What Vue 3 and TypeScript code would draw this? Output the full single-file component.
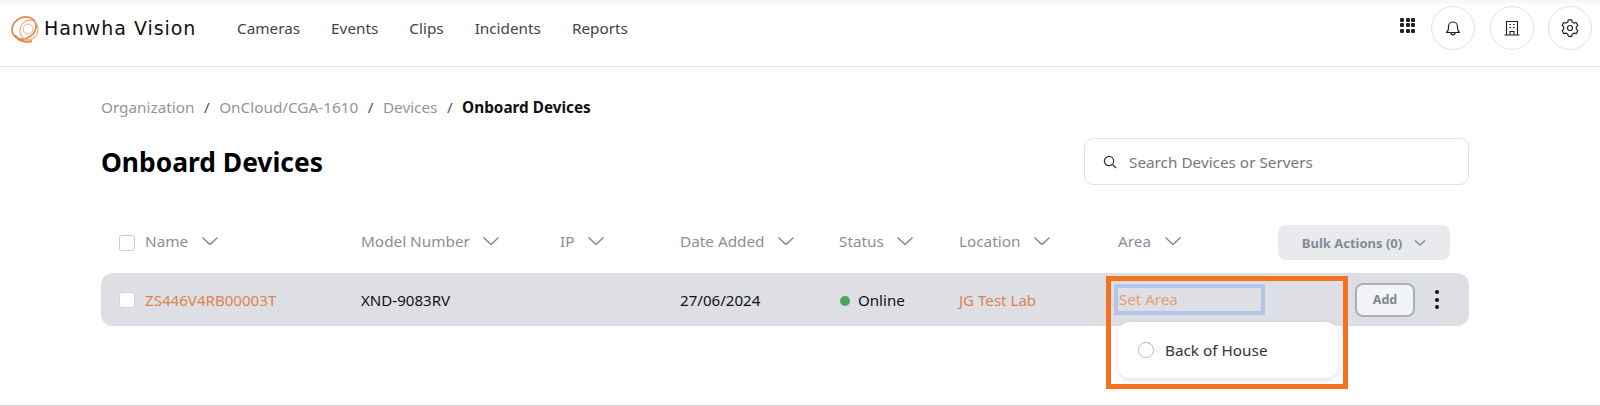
<script setup lang="ts">
interface Column { label: string; cls: string }
const navItems: string[] = ['Cameras', 'Events', 'Clips', 'Incidents', 'Reports']
const columns: Column[] = [
  { label: 'Name', cls: 'c-name' },
  { label: 'Model Number', cls: 'c-model' },
  { label: 'IP', cls: 'c-ip' },
  { label: 'Date Added', cls: 'c-date' },
  { label: 'Status', cls: 'c-status' },
  { label: 'Location', cls: 'c-loc' },
  { label: 'Area', cls: 'c-area' }
]
</script>

<template>
  <div class="page">
    <header class="topbar">
      <div class="logo">
        <svg class="logo-mark" width="33" height="30" viewBox="0 0 33 30" fill="none" stroke="#e08a4a">
          <ellipse cx="14" cy="14" rx="12.500" ry="10.500" stroke-width="1.700" transform="rotate(-30 14 14)" />
          <ellipse cx="19" cy="16" rx="9" ry="10" stroke-width="1.100" stroke="#e9a878" transform="rotate(20 19 16)" />
          <circle cx="18" cy="15" r="5" stroke-width="1" stroke="#e9b48e" />
          <path d="M5 21c3 6 11 8 17 6" stroke-width="2" />
        </svg>
        <span class="logo-text">Hanwha Vision</span>
      </div>
      <nav class="nav">
        <span v-for="item in navItems" :key="item">{{ item }}</span>
      </nav>
      <div class="top-actions">
        <div class="grid-icon"><i v-for="n in 9" :key="n"></i></div>
        <button class="round">
          <svg width="18" height="18" viewBox="0 0 18 18" fill="none" stroke="#222" stroke-width="1.200" stroke-linejoin="round">
            <path d="M2.500 13.500h13c-1.400-1-2-2.200-2-4.500V7.500a4.500 4.500 0 0 0-9 0V9c0 2.300-.6 3.500-2 4.500Z" />
            <path d="M7 13.800a2 2 0 0 0 4 0" />
          </svg>
        </button>
        <button class="round">
          <svg width="18" height="18" viewBox="0 0 18 18" fill="none" stroke="#222" stroke-width="1.100">
            <path d="M3.500 16V2.500h11V16M1.500 16h15" />
            <path d="M7 16v-3.500h4V16" />
            <path d="M6.500 5.500h1.500M10 5.500h1.500M6.500 8.500h1.500M10 8.500h1.500" />
          </svg>
        </button>
        <button class="round">
          <svg width="18" height="18" viewBox="0 0 18 18" fill="none" stroke="#222" stroke-width="1.200" stroke-linejoin="round">
            <path d="M7.300 1.800h3.400l.5 2.100 1.900 1.100 2.100-.6 1.600 2.900-1.500 1.700v2l1.500 1.700-1.600 2.900-2.100-.6-1.900 1.100-.5 2.100H7.300" transform="translate(0 -.9)" />
            <path d="M7.300 1.800l-.5 2.100-1.900 1.100-2.100-.6-1.600 2.900 1.500 1.700v2l-1.500 1.700 1.600 2.900 2.100-.6 1.900 1.100.5 2.100" transform="translate(0 -.9)" />
            <circle cx="9" cy="9" r="2.500" />
          </svg>
        </button>
      </div>
    </header>

    <main class="content">
      <div class="crumbs">
        <span>Organization</span><em>/</em>
        <span>OnCloud/CGA-1610</span><em>/</em>
        <span>Devices</span><em>/</em>
        <strong>Onboard Devices</strong>
      </div>

      <div class="title-row">
        <h1>Onboard Devices</h1>
        <div class="search">
          <svg width="14" height="14" viewBox="0 0 14 14" fill="none" stroke="#333" stroke-width="1.200">
            <circle cx="6" cy="6" r="4.600" />
            <path d="M9.500 9.500l3.500 3.500" />
          </svg>
          <span>Search Devices or Servers</span>
        </div>
      </div>

      <div class="table-head">
        <span class="check head-check"></span>
        <div v-for="col in columns" :key="col.label" class="th" :class="col.cls">
          <span>{{ col.label }}</span>
          <svg class="chev" width="18" height="10" viewBox="0 0 18 10" fill="none" stroke="#7d8791" stroke-width="1.300">
            <path d="M1.500 1.500 9 8.500l7.500-7" />
          </svg>
        </div>
        <button class="bulk">
          <span>Bulk Actions (0)</span>
          <svg width="12" height="8" viewBox="0 0 12 8" fill="none" stroke="#838b96" stroke-width="1.500">
            <path d="M1 1.500 6 6l5-4.500" />
          </svg>
        </button>
      </div>

      <div class="table-row">
        <span class="check row-check"></span>
        <div class="td c-name link">ZS446V4RB00003T</div>
        <div class="td c-model">XND-9083RV</div>
        <div class="td c-ip"></div>
        <div class="td c-date">27/06/2024</div>
        <div class="td c-status"><i class="dot"></i>Online</div>
        <div class="td c-loc link">JG Test Lab</div>
        <div class="td c-area">
          <span class="set-area">Set Area</span>
          <div class="menu">
            <i class="radio"></i>
            <span>Back of House</span>
          </div>
          <div class="callout"></div>
        </div>
        <button class="add">Add</button>
        <div class="kebab"><i></i><i></i><i></i></div>
      </div>
    </main>
  </div>
</template>

<style scoped>
.page {
  width: 1600px;
  height: 406px;
  box-sizing: border-box;
  background: #fff;
  border-bottom: 1px solid #c8c8c8;
  overflow: hidden;
  font-family: "Noto Sans", "Open Sans", sans-serif;
  color: #111;
}
.topbar {
  height: 67px;
  box-sizing: border-box;
  display: flex;
  align-items: center;
  border-bottom: 1px solid #e6e6e6;
  background: linear-gradient(#f6f6f6, #fff 6px);
  padding: 0 8px 10px 10px;
}
.logo { display: flex; align-items: center; width: 227px; flex: none; }
.logo-mark { flex: none; margin-top: 1px; }
.logo-text {
  font-family: "DejaVu Sans", sans-serif;
  font-size: 19px;
  letter-spacing: 0.95px;
  margin-left: 1px;
  color: #111;
}
.nav { display: flex; gap: 31px; font-size: 15.300px; color: #444; flex: 1; }
.top-actions { display: flex; align-items: center; }
.grid-icon {
  display: grid;
  grid-template-columns: repeat(3, 4px);
  gap: 1.500px;
  margin-right: 16px;
  margin-top: -6px;
}
.grid-icon i { width: 4px; height: 4px; background: #222; border-radius: 1px; }
.round {
  width: 44px;
  height: 44px;
  border-radius: 50%;
  border: 1.500px solid #e2e2e2;
  background: #fff;
  display: flex;
  align-items: center;
  justify-content: center;
  padding: 0;
  margin-left: 14.500px;
}
.grid-icon + .round { margin-left: 0; }
.content { padding: 0 131px 0 101px; }
.crumbs {
  display: flex;
  align-items: center;
  height: 22px;
  margin-top: 29px;
  font-size: 15.300px;
  color: #8f959e;
}
.crumbs em { font-style: normal; color: #555; margin: 0 9.500px; }
.crumbs strong { color: #111; font-weight: 700; }
.title-row {
  display: flex;
  justify-content: space-between;
  align-items: center;
  margin-top: 20px;
}
h1 { margin: 0; font-size: 26.400px; font-weight: 700; color: #000; line-height: 47px; position: relative; top: 1px; }
.search {
  width: 385px;
  height: 47px;
  box-sizing: border-box;
  border: 1.500px solid #e0e2e5;
  border-radius: 9px;
  display: flex;
  align-items: center;
  gap: 12px;
  padding-left: 18px;
  font-size: 15.300px;
  color: #777;
}
.table-head {
  display: flex;
  align-items: center;
  height: 35px;
  margin-top: 40px;
  position: relative;
}
.check {
  flex: none;
  width: 16px;
  height: 16px;
  box-sizing: border-box;
  border-radius: 3px;
  margin: 0 10px 0 18px;
}
.head-check { border: 1.500px solid #c9ccd1; background: #fff; }
.row-check { background: #fff; border: 1px solid #d2d4d9; }
.th {
  display: flex;
  align-items: center;
  gap: 12.500px;
  padding-bottom: 3px;
  font-size: 15.300px;
  color: #87909a;
}
.c-name { width: 216px; flex: none; }
.c-model { width: 199px; flex: none; }
.c-ip { width: 120px; flex: none; }
.c-date { width: 159px; flex: none; }
.c-status { width: 120px; flex: none; }
.c-loc { width: 159px; flex: none; }
.c-area { width: 160px; flex: none; }
.bulk {
  width: 172px;
  height: 35px;
  border: 0;
  border-radius: 8px;
  background: #e9eaed;
  color: #838b96;
  font: 700 13px "Noto Sans", sans-serif;
  display: flex;
  align-items: center;
  justify-content: center;
  gap: 12px;
}
.table-row {
  display: flex;
  align-items: center;
  height: 53px;
  margin-top: 13px;
  background: #dddfe5;
  border-radius: 12px;
}
.td { font-size: 15.100px; color: #111; display: flex; align-items: center; }
.link { color: #e0834f; }
.dot {
  width: 10px;
  height: 10px;
  border-radius: 50%;
  background: #4fa45e;
  margin: 2px 8px 0 1px;
}
.c-area.td { position: relative; height: 100%; }
.set-area {
  box-sizing: border-box;
  position: absolute;
  left: -4px;
  top: 11px;
  width: 151px;
  height: 31px;
  padding-left: 1px;
  border: 4px solid #b3c5e8;
  display: flex;
  align-items: center;
  color: #e89d73;
  line-height: 1;
}
.menu {
  position: absolute;
  left: 0;
  top: 49px;
  width: 220px;
  height: 56px;
  box-sizing: border-box;
  display: flex;
  align-items: center;
  gap: 11px;
  padding-left: 20px;
  padding-bottom: 1px;
  border-radius: 12px;
  background: #fff;
  box-shadow: 0 2px 6px rgba(0, 0, 0, 0.12);
  color: #333;
  font-size: 15.300px;
  z-index: 1;
}
.radio {
  flex: none;
  width: 16px;
  height: 16px;
  box-sizing: border-box;
  border-radius: 50%;
  border: 1.500px solid #b9bcc1;
}
.callout {
  position: absolute;
  left: -12px;
  top: 3px;
  width: 242px;
  height: 113px;
  box-sizing: border-box;
  border: 5px solid #f5711f;
  z-index: 2;
}
.add {
  width: 60px;
  height: 34px;
  margin-left: 77px;
  padding: 0;
  box-sizing: border-box;
  border: 2px solid #a9afbb;
  border-radius: 8px;
  background: #f2f4f8;
  color: #7f8794;
  font: 700 12.500px "Noto Sans", sans-serif;
}
.kebab {
  display: flex;
  flex-direction: column;
  gap: 3.500px;
  margin-left: 20px;
}
.kebab i { width: 4px; height: 4px; border-radius: 50%; background: #111; }
</style>
